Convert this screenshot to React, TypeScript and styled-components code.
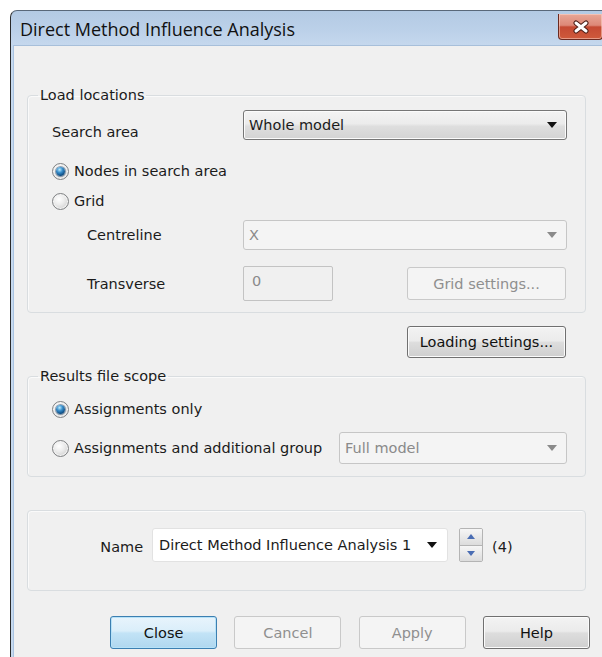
import React from "react";
import styled, { createGlobalStyle, css } from "styled-components";

const GlobalStyle = createGlobalStyle`
  html, body {
    margin: 0;
    padding: 0;
    background: #ffffff;
    overflow: hidden;
  }
  body {
    font-family: "DejaVu Sans", "Liberation Sans", sans-serif;
    font-size: 14.5px;
    color: #1b1b1b;
  }
`;

const Window = styled.div`
  margin: 10px 0 0 10px;
  width: 592px;
  height: 660px;
  display: flex;
  flex-direction: column;
  border-left: 1px solid #2a2a2a;
  border-top: 1px solid #59687a;
  border-top-left-radius: 7px;
  background: linear-gradient(#b3cae4 0px, #bcd1e9 20px, #c6d9ee 36px);
`;

const TitleBar = styled.div`
  height: 34px;
  display: flex;
  align-items: flex-start;
  padding-left: 9px;
`;

const Title = styled.div`
  font-family: "Open Sans", "Noto Sans", sans-serif;
  font-size: 18px;
  line-height: 36px;
  color: #111;
`;

const CloseBox = styled.div`
  margin-left: auto;
  margin-top: 3px;
  width: 45px;
  height: 26px;
  box-sizing: border-box;
  border: 1px solid #6b2a20;
  border-top: none;
  border-radius: 0 0 4px 4px;
  background: linear-gradient(#e8a797 0%, #dd8877 45%, #c54a33 52%, #cf5a3b 100%);
  box-shadow: inset 0 0 0 1px rgba(255, 220, 210, 0.5);
  display: flex;
  align-items: center;
  justify-content: center;
`;

const Client = styled.div`
  flex: 1;
  margin-left: 2px;
  border-left: 1px solid #a9c3e1;
  border-top: 1px solid #a7bfda;
  background: #f0f0f0;
  padding: 0 17px 0 13px;
  display: flex;
  flex-direction: column;
`;

const groupBorder = css`
  border: 1px solid #d9dde0;
  border-radius: 4px;
  box-shadow: inset 1px 1px 0 #fafafa;
`;

const Group = styled.fieldset<{ $top: number }>`
  ${groupBorder};
  margin: ${(p) => p.$top}px 0 0 0;
  padding: 0;
  min-width: 0;
`;

const Legend = styled.legend`
  margin-left: 10px;
  padding: 0 2px;
  line-height: 18px;
  color: #1b1b1b;
`;

const PlainGroup = styled.div`
  ${groupBorder};
  margin-top: 33px;
  padding: 17px 0 28px;
  display: flex;
  justify-content: center;
  align-items: center;
`;

const GroupBody = styled.div<{ $top: number; $bottom: number }>`
  display: flex;
  flex-direction: column;
  padding: ${(p) => p.$top}px 18px ${(p) => p.$bottom}px 24px;
`;

const FieldRow = styled.div<{ $gap?: number; $cols?: string }>`
  display: grid;
  grid-template-columns: ${(p) => p.$cols || "191px 1fr"};
  align-items: center;
  margin-top: ${(p) => p.$gap || 0}px;
`;

const Label = styled.span<{ $indent?: number; $drop?: number }>`
  padding-left: ${(p) => p.$indent || 0}px;
  margin-top: ${(p) => p.$drop || 0}px;
  white-space: nowrap;
`;

const RadioRow = styled.label<{ $gap: number }>`
  display: flex;
  align-items: center;
  height: 22px;
  margin-top: ${(p) => p.$gap}px;
  white-space: nowrap;
`;

const RadioDot = styled.span<{ $on?: boolean }>`
  width: 17px;
  height: 17px;
  box-sizing: border-box;
  border-radius: 50%;
  border: 1px solid #7f8183;
  background: radial-gradient(circle at 40% 35%, #ffffff 0%, #ececec 40%, #c4c4c4 100%);
  box-shadow: inset 0 0 0 1px #f4f4f4;
  margin-right: 5px;
  flex: none;
  display: flex;
  align-items: center;
  justify-content: center;

  &::after {
    content: "";
    display: ${(p) => (p.$on ? "block" : "none")};
    width: 9px;
    height: 9px;
    border-radius: 50%;
    background: radial-gradient(circle at 40% 30%, #b9ecff 0%, #3a8fcc 35%, #0f4f86 70%, #0b2f52 100%);
    box-shadow: 0 0 0 1px rgba(20, 60, 100, 0.45);
  }
`;

const Select = styled.div<{ $disabled?: boolean; $white?: boolean; $height?: number }>`
  box-sizing: border-box;
  height: ${(p) => p.$height || 30}px;
  display: flex;
  align-items: center;
  padding: 0 9px 0 5px;
  border-radius: 3px;
  white-space: nowrap;
  ${(p) =>
    p.$white
      ? css`
          border: 1px solid #e2e2e2;
          background: #ffffff;
          padding-left: 6px;
          padding-right: 10px;
        `
      : p.$disabled
      ? css`
          border: 1px solid #c6c6c6;
          background: #f4f4f4;
          color: #8a8a8a;
        `
      : css`
          border: 1px solid #767676;
          background: linear-gradient(#f3f3f3 0%, #ececec 45%, #dedede 55%, #d3d3d3 100%);
          box-shadow: inset 0 0 0 1px #fbfbfb;
        `}
`;

const SelectText = styled.span`
  flex: 1;
  padding-bottom: 1px;
`;

const TextBox = styled.div`
  box-sizing: border-box;
  height: 35px;
  border: 1px solid #c3c3c3;
  border-radius: 2px;
  background: #f0f0f0;
  color: #8a8a8a;
  padding: 5px 8px;
  line-height: 18px;
`;

const Button = styled.button<{ $kind?: "normal" | "default" | "disabled"; $w: number; $h: number }>`
  box-sizing: border-box;
  width: ${(p) => p.$w}px;
  height: ${(p) => p.$h}px;
  font: inherit;
  border-radius: 3px;
  padding: 0;
  ${(p) =>
    p.$kind === "disabled"
      ? css`
          border: 1px solid #c9c9c9;
          background: #f4f4f4;
          color: #8f8f8f;
        `
      : p.$kind === "default"
      ? css`
          border: 1px solid #3c7fb1;
          background: linear-gradient(#e8f4fc 0%, #daeefa 45%, #c2e3f6 52%, #b0d7ef 100%);
          box-shadow: inset 0 0 0 1px #b7e2f8;
          color: #111;
        `
      : css`
          border: 1px solid #707070;
          background: linear-gradient(#f3f3f3 0%, #ebebeb 46%, #dddddd 52%, #cfcfcf 100%);
          box-shadow: inset 0 0 0 1px #fbfbfb;
          color: #111;
        `}
`;

const RightAligned = styled.div<{ $top: number; $right: number }>`
  display: flex;
  justify-content: flex-end;
  margin-top: ${(p) => p.$top}px;
  margin-right: ${(p) => p.$right}px;
`;

const NameLabel = styled.span`
  margin-right: 9px;
  padding-top: 4px;
`;

const Spinner = styled.div`
  display: flex;
  flex-direction: column;
  margin-left: 11px;
  width: 24px;
  height: 34px;
  box-sizing: border-box;
  border: 1px solid #b4b4b4;
  border-radius: 2px;
  overflow: hidden;
`;

const SpinHalf = styled.div`
  flex: 1;
  background: linear-gradient(#f6f6f6, #dcdcdc);
  display: flex;
  align-items: center;
  justify-content: center;

  & + & {
    border-top: 1px solid #b4b4b4;
  }
`;

const Count = styled.span`
  margin-left: 9px;
  padding-top: 4px;
`;

const ButtonRow = styled.div`
  display: flex;
  justify-content: flex-end;
  gap: 17.3px;
  margin-top: 25px;
  margin-right: -4px;
`;

const Arrow = ({ color = "#111" }: { color?: string }) => (
  <svg width="10" height="6" viewBox="0 0 10 6">
    <polygon points="0,0 10,0 5,6" fill={color} />
  </svg>
);

const SpinArrow = ({ up }: { up?: boolean }) => (
  <svg width="8" height="5" viewBox="0 0 8 5">
    <polygon points={up ? "0,5 8,5 4,0" : "0,0 8,0 4,5"} fill="#4a6db3" />
  </svg>
);

const CloseGlyph = () => (
  <svg width="18" height="14" viewBox="0 0 18 14">
    <path d="M4 3 L14 11 M14 3 L4 11" stroke="#4a1d16" strokeWidth="5" strokeLinecap="round" />
    <path d="M4 3 L14 11 M14 3 L4 11" stroke="#ffffff" strokeWidth="3" strokeLinecap="round" />
  </svg>
);

const Radio = ({ on, gap, children }: { on?: boolean; gap: number; children: React.ReactNode }) => (
  <RadioRow $gap={gap}>
    <RadioDot $on={on} />
    {children}
  </RadioRow>
);

export default function App() {
  return (
    <>
      <GlobalStyle />
      <Window>
        <TitleBar>
          <Title>Direct Method Influence Analysis</Title>
          <CloseBox>
            <CloseGlyph />
          </CloseBox>
        </TitleBar>
        <Client>
          <Group $top={40}>
            <Legend>Load locations</Legend>
            <GroupBody $top={6} $bottom={11}>
              <FieldRow>
                <Label $drop={14}>Search area</Label>
                <Select>
                  <SelectText>Whole model</SelectText>
                  <Arrow />
                </Select>
              </FieldRow>
              <Radio on gap={20}>
                Nodes in search area
              </Radio>
              <Radio gap={8}>Grid</Radio>
              <FieldRow $gap={8}>
                <Label $indent={35}>Centreline</Label>
                <Select $disabled>
                  <SelectText>X</SelectText>
                  <Arrow color="#8a8a8a" />
                </Select>
              </FieldRow>
              <FieldRow $gap={16} $cols="191px 90px 1fr">
                <Label $indent={35}>Transverse</Label>
                <TextBox>0</TextBox>
                <RightAligned $top={0} $right={1}>
                  <Button $kind="disabled" $w={159} $h={33}>
                    Grid settings...
                  </Button>
                </RightAligned>
              </FieldRow>
            </GroupBody>
          </Group>

          <RightAligned $top={13} $right={20}>
            <Button $w={159} $h={32}>
              Loading settings...
            </Button>
          </RightAligned>

          <Group $top={9}>
            <Legend>Results file scope</Legend>
            <GroupBody $top={2} $bottom={12}>
              <Radio on gap={11}>
                Assignments only
              </Radio>
              <FieldRow $gap={12} $cols="1fr 228px">
                <Radio gap={0}>Assignments and additional group</Radio>
                <Select $disabled $height={32}>
                  <SelectText>Full model</SelectText>
                  <Arrow color="#8a8a8a" />
                </Select>
              </FieldRow>
            </GroupBody>
          </Group>

          <PlainGroup>
            <NameLabel>Name</NameLabel>
            <Select $white $height={34} style={{ width: 296 }}>
              <SelectText>Direct Method Influence Analysis 1</SelectText>
              <Arrow />
            </Select>
            <Spinner>
              <SpinHalf>
                <SpinArrow up />
              </SpinHalf>
              <SpinHalf>
                <SpinArrow />
              </SpinHalf>
            </Spinner>
            <Count>(4)</Count>
          </PlainGroup>

          <ButtonRow>
            <Button $kind="default" $w={107} $h={33}>
              Close
            </Button>
            <Button $kind="disabled" $w={107} $h={33}>
              Cancel
            </Button>
            <Button $kind="disabled" $w={107} $h={33}>
              Apply
            </Button>
            <Button $w={107} $h={33}>
              Help
            </Button>
          </ButtonRow>
        </Client>
      </Window>
    </>
  );
}
